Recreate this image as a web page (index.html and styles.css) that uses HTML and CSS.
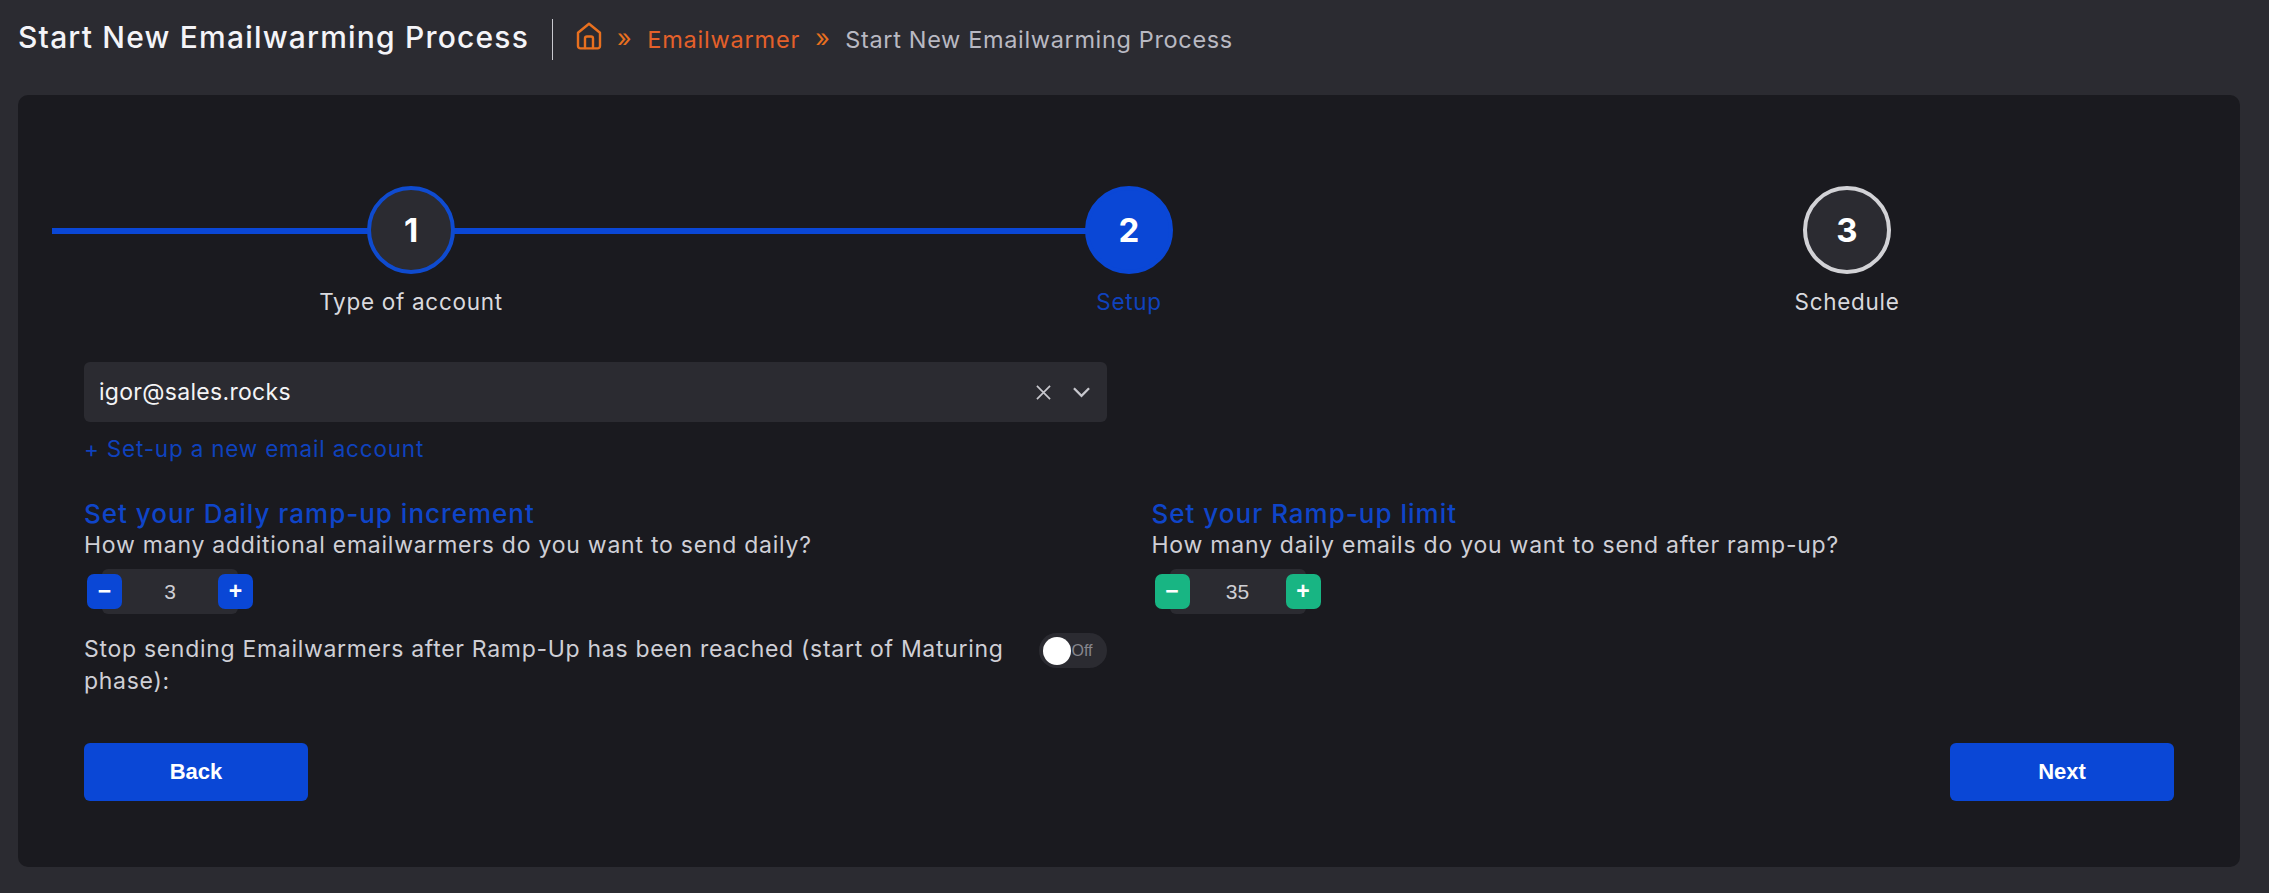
FILE: index.html
```html
<!DOCTYPE html>
<html lang="en">
<head>
<meta charset="utf-8">
<title>Start New Emailwarming Process</title>
<link rel="stylesheet" href="styles.css">
</head>
<body>
<header class="topbar">
  <h1 class="page-title">Start New Emailwarming Process</h1>
  <nav class="crumbs">
    <svg class="home" viewBox="0 0 26 28" fill="none" stroke="currentColor" stroke-width="2.4" stroke-linejoin="round" stroke-linecap="round"><path d="M13 1.8 2 10.8V24a2.4 2.4 0 0 0 2.4 2.4h17.2A2.4 2.4 0 0 0 24 24V10.8Z"/><path d="M9 26V16.5a2 2 0 0 1 2-2h4a2 2 0 0 1 2 2V26"/></svg>
    <span class="sep">»</span>
    <a class="crumb-link">Emailwarmer</a>
    <span class="sep">»</span>
    <span class="crumb-current">Start New Emailwarming Process</span>
  </nav>
</header>
<main class="card">
  <section class="stepper">
    <div class="line"></div>
    <div class="step done"><div class="bubble">1</div><div class="step-label">Type of account</div></div>
    <div class="step active"><div class="bubble">2</div><div class="step-label">Setup</div></div>
    <div class="step"><div class="bubble">3</div><div class="step-label">Schedule</div></div>
  </section>
  <section class="form">
    <div class="grid">
      <div class="col">
        <div class="select">
          <span class="select-value">igor@sales.rocks</span>
          <svg class="ic-x" viewBox="0 0 16 16" fill="none" stroke="currentColor" stroke-width="1.8"><path d="M1 1l14 14M15 1L1 15"/></svg>
          <svg class="ic-chev" viewBox="0 0 18 12" fill="none" stroke="currentColor" stroke-width="2.4"><path d="M1 2l8 8 8-8"/></svg>
        </div>
        <a class="add-link">+ Set-up a new email account</a>
      </div>
      <div class="col"></div>
      <div class="col">
        <h2 class="heading">Set your Daily ramp-up increment</h2>
        <p class="sub">How many additional emailwarmers do you want to send daily?</p>
        <div class="counter">
          <button class="cnt-btn">−</button><span class="cnt-val">3</span><button class="cnt-btn">+</button>
        </div>
        <div class="stop-row">
          <p class="stop-text">Stop sending Emailwarmers after Ramp-Up has been reached (start of Maturing phase):</p>
          <div class="toggle"><span class="knob"></span><span class="off">Off</span></div>
        </div>
      </div>
      <div class="col">
        <h2 class="heading">Set your Ramp-up limit</h2>
        <p class="sub">How many daily emails do you want to send after ramp-up?</p>
        <div class="counter green">
          <button class="cnt-btn">−</button><span class="cnt-val">35</span><button class="cnt-btn">+</button>
        </div>
      </div>
    </div>
    <div class="actions">
      <button class="btn">Back</button>
      <button class="btn">Next</button>
    </div>
  </section>
</main>
</body>
</html>
```
FILE: styles.css
```css
* { box-sizing: border-box; }
html, body { margin: 0; padding: 0; }
body {
  background: #2b2b31;
  font-family: "Inter", "Liberation Sans", sans-serif;
  color: #d6d6dc;
  padding: 0 29px 26px 18px;
}
.topbar { height: 95px; display: flex; align-items: flex-start; padding-top: 19px; }
.page-title {
  margin: 0; padding-right: 23px; height: 41px; line-height: 36px;
  border-right: 1px solid #c9c9cf;
  font-size: 30px; font-weight: 500; color: #f4f4f8; letter-spacing: 1.2px;
}
.crumbs { display: flex; align-items: center; height: 41px; padding-left: 23px; font-size: 23.5px; letter-spacing: 0.65px; }
.home { width: 26px; height: 28px; color: #e8701f; margin-top: -8px; }
.sep { color: #e8701f; margin: -4px 15px 0 15px; font-size: 25px; }
.crumb-link + .sep { margin: -4px 15px 0 15px; }
.crumb-link { color: #e4602a; letter-spacing: 0.8px; }
.crumb-current { color: #b9b9c2; }

.card { background: #1a1a1f; border-radius: 10px; padding: 91px 34px 66px; }
.stepper { position: relative; display: grid; grid-template-columns: repeat(3, 1fr); }
.line { position: absolute; left: 0; top: 42px; width: 50%; height: 6px; background: #0a47d6; }
.step { position: relative; display: flex; flex-direction: column; align-items: center; }
.bubble {
  width: 88px; height: 88px; border-radius: 50%;
  background: #2b2b31; border: 4px solid #d2d2d6;
  display: flex; align-items: center; justify-content: center;
  font-size: 33px; font-weight: 700; color: #fff;
}
.done .bubble { border-color: #0f4bcf; }
.active .bubble { background: #0a47d6; border-color: #0a47d6; }
.step-label { margin-top: 13px; line-height: 30px; font-size: 22.5px; color: #d9d9de; letter-spacing: 0.7px; }
.active .step-label { color: #0f42bd; }

.form { padding: 45px 32px 0; }
.grid { display: grid; grid-template-columns: 1fr 1fr; column-gap: 45px; }
.select {
  height: 60px; display: flex; align-items: center; padding: 0 17px 0 15px;
  background: #2b2b31; border-radius: 6px;
}
.select-value { flex: 1; font-size: 23px; color: #f4f4f6; letter-spacing: 0.3px; }
.ic-x { width: 15px; height: 15px; color: #c8c8ce; margin-right: 22px; }
.ic-chev { width: 17px; height: 12px; color: #c8c8ce; }
.add-link { display: block; margin-top: 12px; line-height: 30px; font-size: 22.5px; color: #0f42bd; letter-spacing: 0.8px; }
.heading { margin: 35px 0 0; line-height: 30px; font-size: 26px; font-weight: 500; color: #0f45c9; letter-spacing: 1px; }
.sub { margin: 0; line-height: 32px; font-size: 23px; color: #cfcfd6; letter-spacing: 0.76px; }
.counter { display: flex; align-items: center; height: 45px; margin: 8px 0 0 3px; }
.cnt-btn {
  position: relative; width: 35px; height: 35px; padding: 0; border: 0; border-radius: 7px;
  background: #0a47d6; color: #fff; font: 700 23px/35px "Liberation Sans", sans-serif;
}
.green .cnt-btn { background: #18b583; }
.cnt-val {
  width: 136px; height: 45px; margin: 0 -20px; border-radius: 6px;
  background: #2b2b31; text-align: center;
  font: 21px/45px "Liberation Sans", sans-serif; color: #cfcfd4;
}
.stop-row { display: flex; align-items: flex-start; margin-top: 19px; }
.stop-text { flex: 1; margin: 0; padding-right: 20px; line-height: 32px; font-size: 23px; color: #cfcfd6; letter-spacing: 0.7px; }
.toggle {
  width: 68px; height: 35px; border-radius: 18px; background: #2b2b31;
  display: flex; align-items: center; padding-left: 4px;
}
.knob { width: 28px; height: 28px; border-radius: 50%; background: #fff; }
.off { margin-left: 1px; font: 16px "Liberation Sans", sans-serif; color: #86868c; }
.actions { display: flex; justify-content: space-between; margin-top: 46px; }
.btn {
  width: 224px; height: 58px; border: 0; border-radius: 6px;
  background: #0a47d6; color: #fff; font: 700 22px "Liberation Sans", sans-serif;
}
```
